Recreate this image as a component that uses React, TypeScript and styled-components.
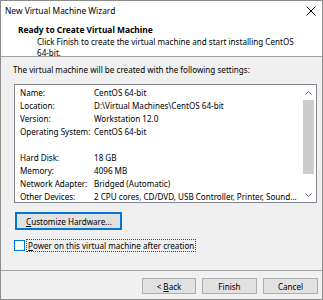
import React from "react";
import styled, { createGlobalStyle } from "styled-components";

const Global = createGlobalStyle`
  html, body { margin: 0; padding: 0; background: #fff; }
  * { box-sizing: border-box; }
  body { font-family: "Noto Sans", "Open Sans", sans-serif; font-size: 8.1px; color: #000; }
`;

const Window = styled.div`
  width: 323px;
  height: 300px;
  border: 1px solid #8c8c8c;
  display: flex;
  flex-direction: column;
  background: #f0f0f0;
  overflow: hidden;
  white-space: nowrap;
`;

const TitleBar = styled.div`
  height: 19px;
  background: #fff;
  display: flex;
  align-items: center;
  justify-content: space-between;
  padding: 0 6px 0 4px;
  font-size: 8.4px;
`;

const Header = styled.div`
  height: 37px;
  background: #fff;
  border-bottom: 1px solid #a0a0a0;
  padding: 4px 0 0 17px;
`;

const HeaderTitle = styled.div`
  font-weight: bold;
  font-size: 8.4px;
  line-height: 12px;
`;

const HeaderSub = styled.div`
  padding-left: 19px;
  line-height: 11px;
  width: 285px;
  white-space: normal;
`;

const Body = styled.div`
  flex: 1;
  padding: 7px 5px 0 12px;
  display: flex;
  flex-direction: column;
`;

const Intro = styled.div`
  line-height: 12px;
`;

const ListBox = styled.div`
  margin-top: 8px;
  margin-left: 1px;
  height: 119px;
  border: 1px solid #828790;
  background: #fff;
  display: flex;
`;

const Rows = styled.div`
  flex: 1;
  padding: 1px 0 0 5px;
`;

const Row = styled.div<{ $gap?: boolean }>`
  display: flex;
  height: 13px;
  line-height: 13px;
  margin-top: ${(p) => (p.$gap ? "13px" : "0")};
`;

const Label = styled.span`
  width: 74px;
  flex: none;
`;

const Scrollbar = styled.div`
  width: 16px;
  display: flex;
  flex-direction: column;
  align-items: center;
  padding: 1px 0;
`;

const Arrow = styled.div`
  height: 13px;
  display: flex;
  align-items: center;
  justify-content: center;
  width: 100%;
`;

const Thumb = styled.div`
  width: 11px;
  flex: 1;
  background: #cdcdcd;
  margin: 1px 0 14px;
`;

const CustomizeButton = styled.div`
  margin-top: 9px;
  margin-left: 2px;
  width: 107px;
  height: 18px;
  border: 1px solid #0078d7;
  box-shadow: inset 0 0 0 1px #0078d7;
  background: #e1e1e1;
  display: flex;
  align-items: center;
  padding-left: 10px;
`;

const CheckRow = styled.div`
  margin-top: 9px;
  margin-left: 1px;
  display: flex;
  align-items: center;
  height: 13px;
`;

const Box = styled.div`
  width: 11px;
  height: 11px;
  border: 1px solid #0078d7;
  background: #fff;
`;

const CheckLabel = styled.span`
  margin-left: 1px;
  border: 1px dotted #444;
  padding: 0 1px;
  line-height: 11px;
`;

const Footer = styled.div`
  height: 29px;
  border-top: 1px solid #a0a0a0;
  display: flex;
  justify-content: flex-end;
  align-items: flex-start;
  padding: 7px 4px 0 0;
  gap: 6px;
`;

const Button = styled.div<{ $w: number }>`
  width: ${(p) => p.$w}px;
  height: 16px;
  border: 1px solid #adadad;
  background: #e1e1e1;
  display: flex;
  align-items: center;
  justify-content: center;
`;

const U = styled.span`
  text-decoration: underline;
`;

const rows1: [string, string][] = [
  ["Name:", "CentOS 64-bit"],
  ["Location:", "D:\\Virtual Machines\\CentOS 64-bit"],
  ["Version:", "Workstation 12.0"],
  ["Operating System:", "CentOS 64-bit"],
];
const rows2: [string, string][] = [
  ["Hard Disk:", "18 GB"],
  ["Memory:", "4096 MB"],
  ["Network Adapter:", "Bridged (Automatic)"],
  ["Other Devices:", "2 CPU cores, CD/DVD, USB Controller, Printer, Sound..."],
];

export default function App() {
  return (
    <>
      <Global />
      <Window>
        <TitleBar>
          <span>New Virtual Machine Wizard</span>
          <svg width="10" height="10" viewBox="0 0 10 10">
            <path d="M0.5 0.5 L9.5 9.5 M9.5 0.5 L0.5 9.5" stroke="#000" strokeWidth="1" fill="none" />
          </svg>
        </TitleBar>
        <Header>
          <HeaderTitle>Ready to Create Virtual Machine</HeaderTitle>
          <HeaderSub>Click Finish to create the virtual machine and start installing CentOS 64-bit.</HeaderSub>
        </Header>
        <Body>
          <Intro>The virtual machine will be created with the following settings:</Intro>
          <ListBox>
            <Rows>
              {rows1.map(([l, v]) => (
                <Row key={l}>
                  <Label>{l}</Label>
                  <span>{v}</span>
                </Row>
              ))}
              {rows2.map(([l, v], i) => (
                <Row key={l} $gap={i === 0}>
                  <Label>{l}</Label>
                  <span>{v}</span>
                </Row>
              ))}
            </Rows>
            <Scrollbar>
              <Arrow>
                <svg width="7" height="4" viewBox="0 0 7 4">
                  <path d="M0.5 3.5 L3.5 0.5 L6.5 3.5" stroke="#606060" fill="none" />
                </svg>
              </Arrow>
              <Thumb />
              <Arrow>
                <svg width="7" height="4" viewBox="0 0 7 4">
                  <path d="M0.5 0.5 L3.5 3.5 L6.5 0.5" stroke="#606060" fill="none" />
                </svg>
              </Arrow>
            </Scrollbar>
          </ListBox>
          <CustomizeButton>
            <span>
              <U>C</U>ustomize Hardware...
            </span>
          </CustomizeButton>
          <CheckRow>
            <Box />
            <CheckLabel>
              <U>P</U>ower on this virtual machine after creation
            </CheckLabel>
          </CheckRow>
        </Body>
        <Footer>
          <Button $w={54}>
            <span>
              &lt; <U>B</U>ack
            </span>
          </Button>
          <Button $w={55}>Finish</Button>
          <Button $w={55}>Cancel</Button>
        </Footer>
      </Window>
    </>
  );
}
